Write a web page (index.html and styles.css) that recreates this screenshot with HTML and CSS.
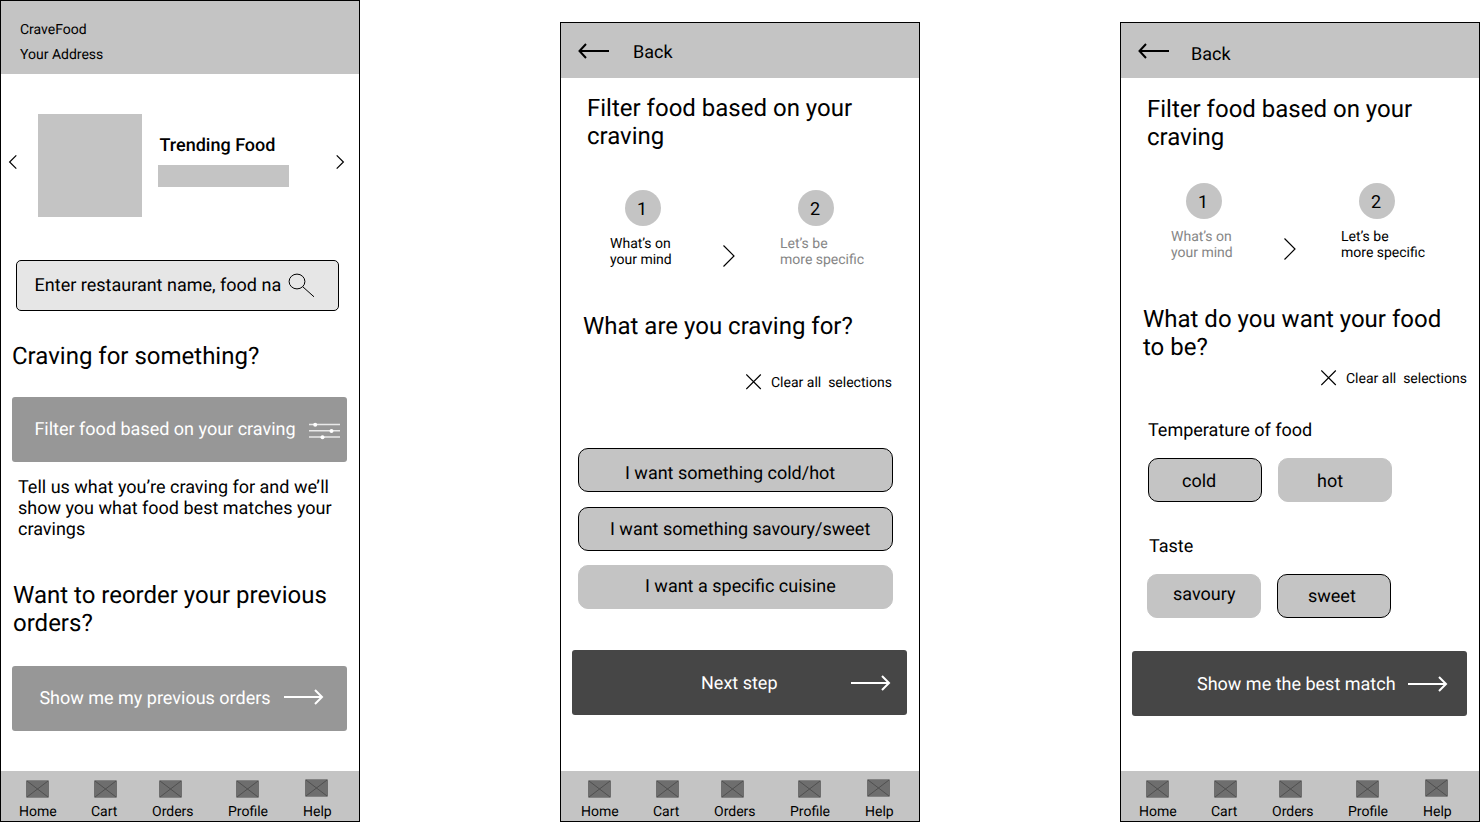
FILE: index.html
```html
<!DOCTYPE html>
<html lang="en">
<head>
<meta charset="utf-8">
<title>CraveFood wireframes</title>
<link rel="stylesheet" href="styles.css">
</head>
<body>
<svg class="defs" width="0" height="0">
  <symbol id="box" viewBox="0 0 23 18"><rect y=".3" width="23" height="17.400" rx="1" fill="#6e6e6e"/><path d="M1 1 22 17M22 1 1 17" stroke="#4c4c4c" stroke-width=".9"/></symbol>
  <symbol id="arrow" viewBox="0 0 40 18"><path d="M0 9H38M31 2 38 9 31 16" fill="none" stroke="#fff" stroke-width="2"/></symbol>
  <symbol id="arrow-back" viewBox="0 0 32 18"><path d="M31 9H2M8 2 1.500 9 8 16" fill="none" stroke="#000" stroke-width="2"/></symbol>
  <symbol id="next" viewBox="0 0 14 24"><path d="M1.500 1.500 12 12 1.500 22.500" fill="none" stroke="#000" stroke-width="1.150"/></symbol>
  <symbol id="cross" viewBox="0 0 16 16"><path d="M.3 .5 14.800 15M14.800 .5 .3 15" stroke="#000" stroke-width="1.150"/></symbol>
</svg>
<main class="board">
  <section class="screen home">
    <header class="brand"><div>CraveFood</div><div>Your Address</div></header>
    <div class="carousel">
      <svg class="chev" width="10" height="16"><path d="M8.300 1.300 1.600 8 8.300 14.700" fill="none" stroke="#000" stroke-width="1.200"/></svg>
      <div class="thumb"></div>
      <div class="trend"><h3>Trending Food</h3><div class="bar"></div></div>
      <svg class="chev chev-right" width="10" height="16"><path d="M.7 1.300 7.400 8 .7 14.700" fill="none" stroke="#000" stroke-width="1.200"/></svg>
    </div>
    <div class="search"><span>Enter restaurant name, food na</span>
      <svg class="lens" width="28" height="26"><ellipse cx="9" cy="8.500" rx="7.900" ry="7.400" fill="none" stroke="#000"/><path d="M14.800 13.800 26 23.800" stroke="#000"/></svg>
    </div>
    <h2 class="ask">Craving for something?</h2>
    <div class="btn btn-filter"><span>Filter food based on your craving</span>
      <svg class="sliders" width="32" height="20"><path d="M0 4.500H31M0 10.800H31M0 17H31" stroke="#e9e9e9" stroke-width="1.400"/><g fill="#fff"><circle cx="6.200" cy="4.700" r="2"/><circle cx="22.500" cy="11" r="2"/><circle cx="13.500" cy="17.200" r="2"/></g></svg>
    </div>
    <p class="hint">Tell us what you’re craving for and we’ll show you what food best matches your cravings</p>
    <h2 class="reorder">Want to reorder your previous orders?</h2>
    <div class="btn btn-orders"><span>Show me my previous orders</span><svg class="arrow"><use href="#arrow"/></svg></div>
    <nav class="nav">
      <div class="tab t-home"><svg><use href="#box"/></svg>Home</div><div class="tab t-cart"><svg><use href="#box"/></svg>Cart</div><div class="tab t-orders"><svg><use href="#box"/></svg>Orders</div><div class="tab t-profile"><svg><use href="#box"/></svg>Profile</div><div class="tab t-help"><svg><use href="#box"/></svg>Help</div>
    </nav>
  </section>

  <section class="screen short craving">
    <header class="back"><svg><use href="#arrow-back"/></svg><span>Back</span></header>
    <h2 class="title">Filter food based on your craving</h2>
    <div class="steps">
      <div class="step one"><div class="dot"><span>1</span></div><div class="label">What’s on<br>your mind</div></div>
      <svg class="sep"><use href="#next"/></svg>
      <div class="step two off"><div class="dot"><span>2</span></div><div class="label">Let’s be<br>more specific</div></div>
    </div>
    <h2 class="question">What are you craving for?</h2>
    <div class="clear"><svg><use href="#cross"/></svg><span>Clear all  selections</span></div>
    <div class="options">
      <div class="chip on cold-hot"><span>I want something cold/hot</span></div>
      <div class="chip on savoury-sweet"><span>I want something savoury/sweet</span></div>
      <div class="chip cuisine"><span>I want a specific cuisine</span></div>
    </div>
    <div class="btn dark"><span>Next step</span><svg class="arrow"><use href="#arrow"/></svg></div>
    <nav class="nav nav-shift">
      <div class="tab t-home"><svg><use href="#box"/></svg>Home</div><div class="tab t-cart"><svg><use href="#box"/></svg>Cart</div><div class="tab t-orders"><svg><use href="#box"/></svg>Orders</div><div class="tab t-profile"><svg><use href="#box"/></svg>Profile</div><div class="tab t-help"><svg><use href="#box"/></svg>Help</div>
    </nav>
  </section>

  <section class="screen short specific">
    <header class="back"><svg><use href="#arrow-back"/></svg><span>Back</span></header>
    <h2 class="title">Filter food based on your craving</h2>
    <div class="steps">
      <div class="step one off"><div class="dot"><span>1</span></div><div class="label">What’s on<br>your mind</div></div>
      <svg class="sep"><use href="#next"/></svg>
      <div class="step two"><div class="dot"><span>2</span></div><div class="label">Let’s be<br>more specific</div></div>
    </div>
    <h2 class="question">What do you want your food to be?</h2>
    <div class="clear"><svg><use href="#cross"/></svg><span>Clear all  selections</span></div>
    <h4 class="temp">Temperature of food</h4>
    <div class="pair"><div class="chip on cold"><span>cold</span></div><div class="chip hot"><span>hot</span></div></div>
    <h4 class="taste">Taste</h4>
    <div class="pair pair-taste"><div class="chip savoury"><span>savoury</span></div><div class="chip on sweet"><span>sweet</span></div></div>
    <div class="btn dark"><span>Show me the best match</span><svg class="arrow"><use href="#arrow"/></svg></div>
    <nav class="nav">
      <div class="tab t-home"><svg><use href="#box"/></svg>Home</div><div class="tab t-cart"><svg><use href="#box"/></svg>Cart</div><div class="tab t-orders"><svg><use href="#box"/></svg>Orders</div><div class="tab t-profile"><svg><use href="#box"/></svg>Profile</div><div class="tab t-help"><svg><use href="#box"/></svg>Help</div>
    </nav>
  </section>
</main>
</body>
</html>
```
FILE: styles.css
```css
* { box-sizing: border-box; }
body { margin: 0; background: #fff; color: #000; font: 400 18px/21px Roboto, sans-serif; text-rendering: geometricPrecision; overflow: hidden; }
h2, h3, h4, p { margin: 0; font-weight: 400; }
h2 { font-size: 24px; line-height: 28px; }
h4 { font-size: 18px; }
svg { display: block; flex: none; }
span { white-space: pre; }
.defs { display: none; }

.board { display: flex; gap: 200px; width: 1480px; height: 822px; align-items: flex-end; }
.screen { width: 360px; height: 822px; flex: none; border: 1px solid #000; display: flex; flex-direction: column; }
.short { height: 800px; }

/* Home */
.brand { height: 73px; padding: 21px 0 0 19px; background: #c4c4c4; font-size: 14px; line-height: 16px; display: flex; flex-direction: column; gap: 9px; }
.carousel { display: flex; margin-top: 40px; padding-left: 7px; }
.chev { margin-top: 40px; }
.thumb { width: 104px; height: 103px; margin-left: 20px; background: #c4c4c4; }
.trend { width: 131px; margin-left: 16px; padding-top: 21px; }
.trend h3 { font-size: 18px; font-weight: 500; padding-left: 1.500px; white-space: nowrap; }
.bar { height: 22px; margin-top: 9px; background: #c4c4c4; }
.chev-right { margin-left: 47px; }
.search { width: 323px; height: 51px; margin: 43px 0 0 15px; padding: 14px 0 0 17.600px; border: 1px solid #000; border-radius: 5px; background: #e6e6e6; display: flex; }
.search span { width: 253.400px; }
.lens { margin-top: -2px; }
.ask { margin: 31px 0 0 11px; }
.btn { width: 335px; height: 65px; margin-left: 11px; border-radius: 3px; background: #979797; color: #fff; display: flex; padding-top: 22px; }
.btn-filter { margin-top: 27px; padding-left: 22.400px; }
.btn-filter span { width: 274.600px; }
.sliders { margin-top: 1px; }
.hint { width: 325px; margin: 15px 0 0 17px; }
.reorder { width: 335px; margin: 41px 0 0 12px; }
.btn-orders { margin-top: 29px; padding-left: 27.400px; }
.btn-orders span { width: 244.600px; }
.arrow { width: 40px; height: 18px; }

/* Bottom navigation */
.nav { height: 50px; margin-top: auto; padding-top: 9px; background: #c4c4c4; font-size: 14px; line-height: 16px; display: grid; grid-template-columns: 72px 61px 76px 75px 1fr; padding-left: 18px; }
.nav-shift { padding-left: 20px; }
.tab svg { width: 23px; height: 18px; margin-bottom: 6px; }
.t-home svg { margin-left: 7px; }
.t-cart svg { margin-left: 3px; }
.t-orders svg { margin-left: 7px; }
.t-profile svg { margin-left: 8px; }
.t-help svg { margin: -1px 0 7px 2px; }

/* Filter screens */
.back { height: 55px; padding: 19px 0 0 17px; background: #c4c4c4; display: flex; }
.back svg { width: 32px; height: 18px; }
.back span { margin-left: 23px; }
.specific .back span { margin: 2px 0 0 21px; }
.title { width: 300px; margin: 16px 0 0 26px; }
.specific .title { margin-top: 17px; }
.steps { display: flex; margin: 40px 0 0 49px; }
.specific .steps { margin: 32px 0 0 50px; }
.step { font-size: 14px; line-height: 16px; }
.one { width: 112px; }
.dot { width: 36px; height: 36px; margin: 0 0 10px 15px; padding-top: 9px; border-radius: 50%; background: #c4c4c4; font-size: 18px; line-height: 21px; text-align: center; }
.dot span { padding-right: 2px; }
.two .dot { margin-left: 18px; }
.off .label { color: #868686; }
.sep { width: 14px; height: 24px; margin: 54px 44px 0 0; }
.question { width: 320px; margin: 44px 0 0 22px; }
.clear { display: flex; margin: 35px 0 0 185px; font-size: 14px; line-height: 16px; }
.clear svg { width: 16px; height: 16px; margin-top: -1px; }
.clear span { margin-left: 9px; }
.specific .clear { margin: 10px 0 0 200px; }
.options { margin: 57px 0 0 17px; display: grid; grid-template-rows: 44px 44px 44px; row-gap: 15px; width: 315px; }
.options .cuisine { margin-top: -1px; }
.chip { height: 44px; border-radius: 10px; background: #c4c4c4; border: 1px solid #c4c4c4; }
.on { border-color: #000; }
.cold-hot { padding: 14px 0 0 46px; }
.savoury-sweet { padding: 11px 0 0 31px; }
.cuisine { padding: 10px 0 0 66px; }
.dark { background: #464646; padding-top: 23px; }
.craving .dark { margin-top: 40px; padding-left: 129px; }
.craving .dark span { width: 150px; }
.dark .arrow { margin-top: 1px; }
.specific .dark { margin-top: 33px; padding-left: 65px; }
.specific .dark span { width: 211px; }
.temp { margin: 33px 0 0 27px; }
.taste { margin: 34px 0 0 28px; }
.pair { display: flex; gap: 16px; margin: 17px 0 0 27px; }
.pair-taste { margin-left: 26px; }
.pair .chip { width: 114px; }
.cold { padding: 12px 0 0 33px; }
.hot { padding: 12px 0 0 38px; }
.savoury { padding: 9px 0 0 25px; }
.sweet { padding: 11px 0 0 30px; }
```
